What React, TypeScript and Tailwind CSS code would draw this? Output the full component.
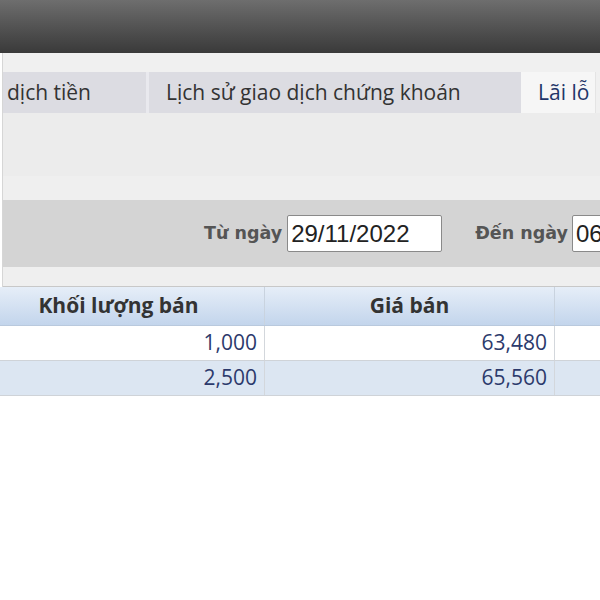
import React from "react";

const seg = { fontFamily: '"Open Sans", "Noto Sans", sans-serif' };
const tah = { fontFamily: '"DejaVu Sans", Verdana, sans-serif' };
const ari = { fontFamily: '"Liberation Sans", Arial, sans-serif' };

export default function App() {
  const rows = [
    { kl: "1,000", gia: "63,480", bg: "bg-white" },
    { kl: "2,500", gia: "65,560", bg: "bg-[#dce6f2]" },
  ];
  return (
    <div className="w-[600px] h-[600px] overflow-hidden bg-white">
      <div className="h-[53px] bg-gradient-to-b from-[#6e6e6e] to-[#3a3a3a]" />
      <div className="ml-[2px] border-l border-[#d6d6d6]">
        <div className="bg-[#f0f0f0] pt-[19px]">
          <div className="flex h-[41px] text-[21px] whitespace-nowrap" style={seg}>
            <div className="w-[143px] shrink-0 bg-[#dcdce2] flex items-center pl-[4px] text-[#333]">dịch tiền</div>
            <div className="w-[3px] shrink-0 bg-[#e9e9ee]" />
            <div className="w-[372px] shrink-0 bg-[#dcdce2] flex items-center pl-[17px] text-[#333]">
              Lịch sử giao dịch chứng khoán
            </div>
            <div className="w-[75px] shrink-0 bg-[#f6f6f6] flex items-center pl-[17px] text-[#1f3568] border-r border-[#e4e4e4]">
              Lãi lỗ
            </div>
          </div>
          <div className="h-[63px] bg-[#ececec]" />
          <div className="h-[24px] bg-[#efefef]" />
        </div>
        <div className="h-[67px] bg-[#d4d4d4] flex items-center pl-[201px] whitespace-nowrap">
          <span className="shrink-0 text-[17.5px] font-bold text-[#555] mr-[5px]" style={tah}>Từ ngày</span>
          <div
            className="shrink-0 w-[155px] h-[37px] bg-white border border-[#8a8a8a] rounded-[2px] flex items-center pl-[3px] text-[24px] text-[#222]"
            style={ari}
          >
            29/11/2022
          </div>
          <span className="shrink-0 ml-[33px] text-[17.5px] font-bold text-[#555] mr-[4px]" style={tah}>Đến ngày</span>
          <div
            className="w-[80px] h-[37px] bg-white border border-[#8a8a8a] rounded-[2px] flex items-center pl-[3px] text-[24px] text-[#222] shrink-0"
            style={ari}
          >
            06
          </div>
        </div>
        <div className="h-[20px] bg-[#efefef] border-b border-[#c8c8c8]" />
      </div>
      <div className="ml-[-27px] whitespace-nowrap" style={seg}>
        <div className="flex h-[39px] bg-gradient-to-b from-[#e6eef8] to-[#c3d5ec] border-b border-[#b9c9dd]">
          <div className="w-[292px] shrink-0 flex items-center justify-center text-[21px] font-bold text-[#333] border-r border-[#c9d3df]">
            Khối lượng bán
          </div>
          <div className="w-[290px] shrink-0 flex items-center justify-center text-[21px] font-bold text-[#333] border-r border-[#c9d3df]">
            Giá bán
          </div>
          <div className="w-[100px] shrink-0" />
        </div>
        {rows.map((r, i) => (
          <div key={i} className={`flex h-[35px] ${r.bg} border-b border-[#cfd3d8]`}>
            <div className="w-[292px] shrink-0 flex items-center justify-end pr-[7px] text-[21px] text-[#2c3a6c] border-r border-[#d3d7dc]">
              {r.kl}
            </div>
            <div className="w-[290px] shrink-0 flex items-center justify-end pr-[7px] text-[21px] text-[#2c3a6c] border-r border-[#d3d7dc]">
              {r.gia}
            </div>
            <div className="w-[100px] shrink-0" />
          </div>
        ))}
      </div>
    </div>
  );
}
